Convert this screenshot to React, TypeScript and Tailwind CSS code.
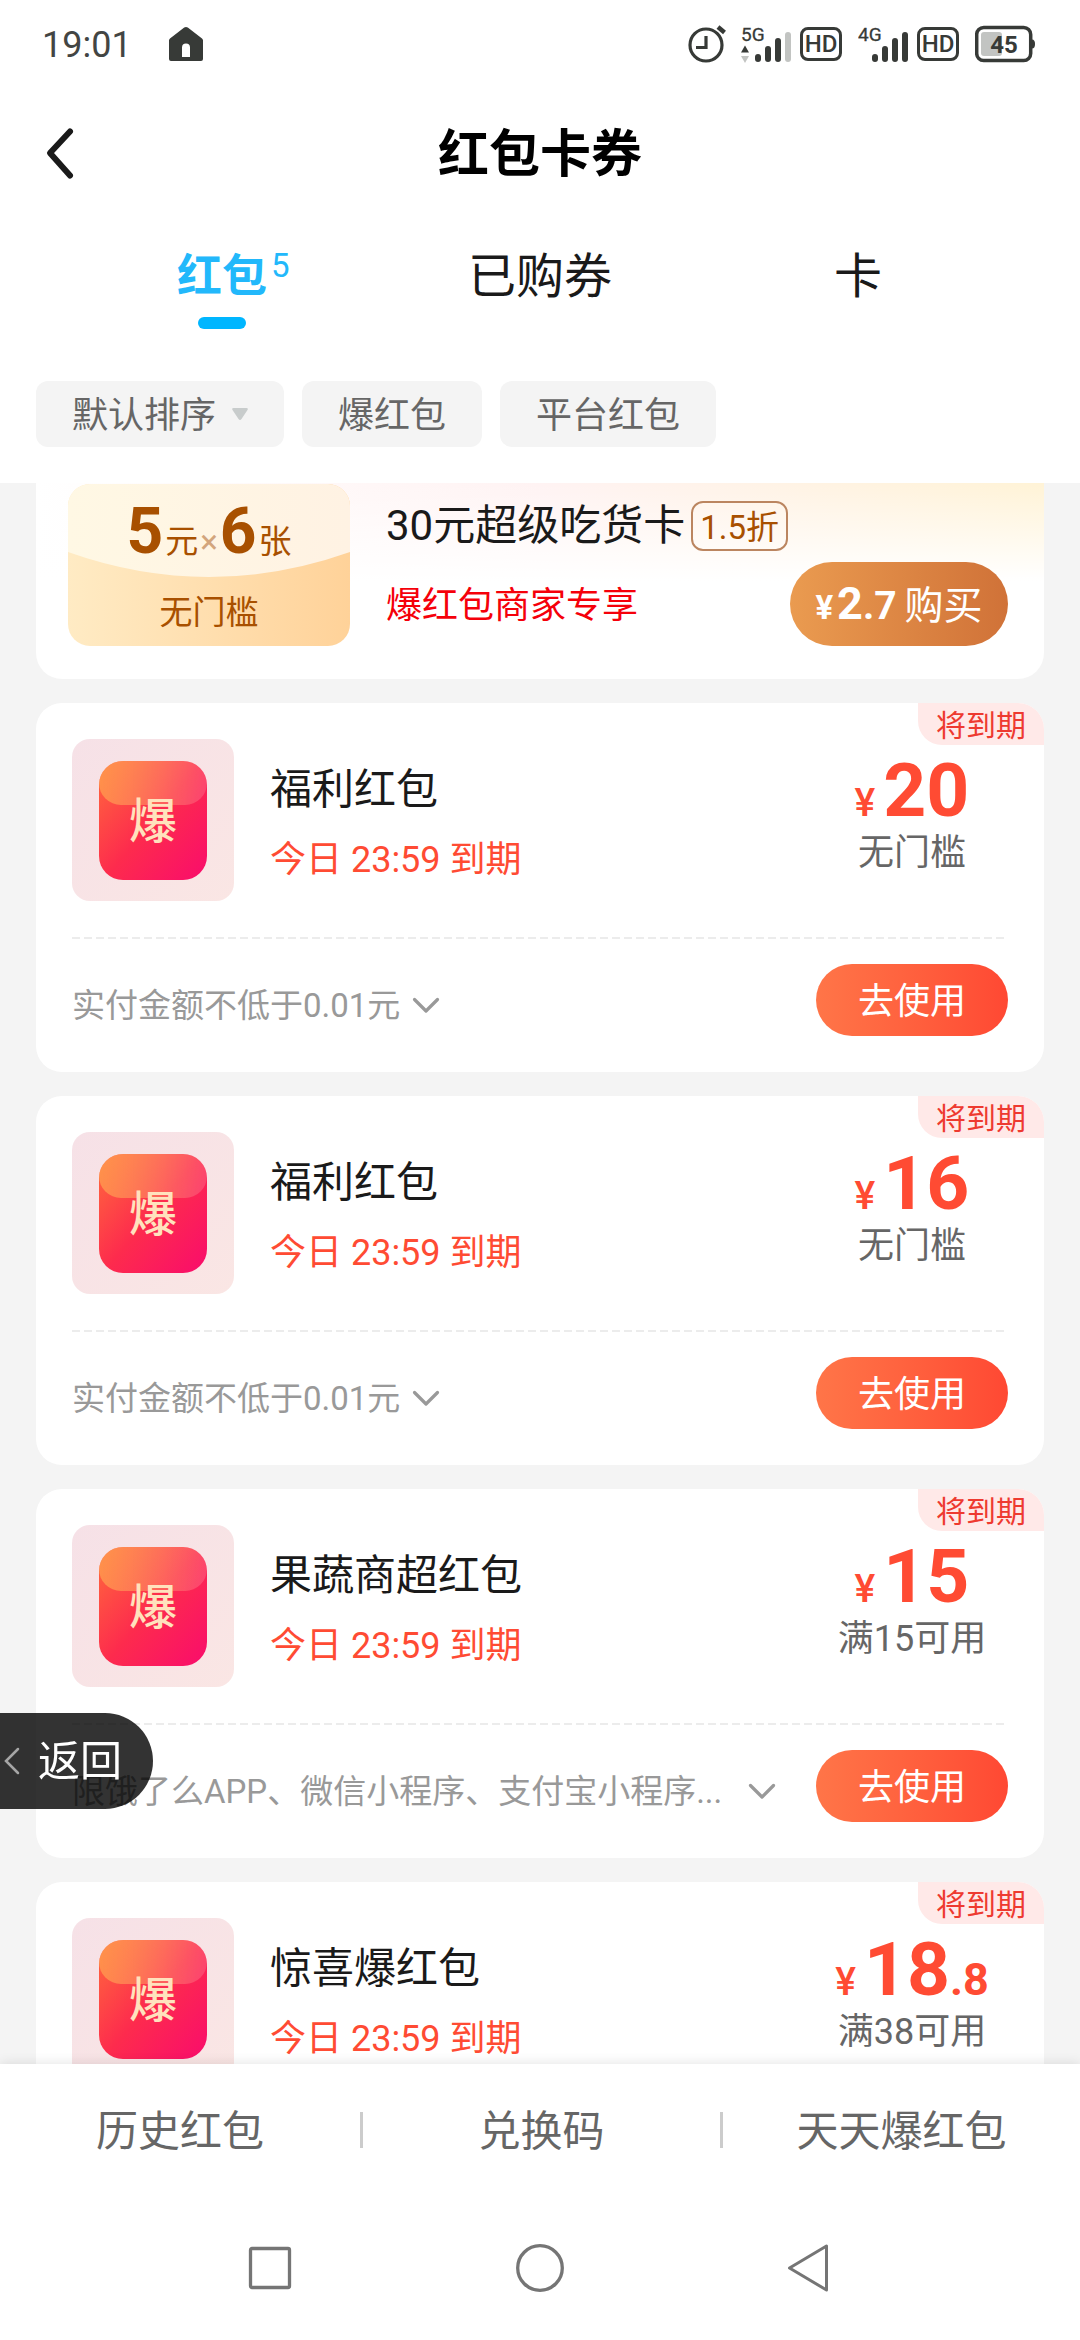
import React, { useState } from "react";

type Coupon = {
  id: number;
  title: string;
  amount: string;
  decimal?: string;
  condition: string;
  rule: string;
  longRule?: boolean;
};

const coupons: Coupon[] = [
  { id: 1, title: "福利红包", amount: "20", condition: "无门槛", rule: "实付金额不低于0.01元" },
  { id: 2, title: "福利红包", amount: "16", condition: "无门槛", rule: "实付金额不低于0.01元" },
  {
    id: 3,
    title: "果蔬商超红包",
    amount: "15",
    condition: "满15可用",
    rule: "限饿了么APP、微信小程序、支付宝小程序...",
    longRule: true,
  },
  { id: 4, title: "惊喜爆红包", amount: "18", decimal: ".8", condition: "满38可用", rule: "实付金额不低于0.01元" },
];

function AlarmIcon() {
  return (
    <svg className="h-10 w-10" viewBox="0 0 40 40" fill="none" stroke="#373a37" aria-hidden="true">
      <circle cx="19" cy="21" r="16" strokeWidth="3.2" />
      <path d="M19 12v11.5H9" strokeWidth="3.2" />
      <path d="M31 3l6.5 5.5" strokeWidth="4.5" />
    </svg>
  );
}

function SignalIcon({ label, weak }: { label: string; weak?: boolean }) {
  return (
    <svg className="h-10 w-[51px]" viewBox="0 0 51 40" fill="#373a37" role="img" aria-label={label}>
      <text x="0" y="17" fontSize="19" fontFamily="Roboto, sans-serif" stroke="#373a37" strokeWidth="0.3">
        {label}
      </text>
      {weak && <path d="M4 21.500l4 7H0z" />}
      {weak && <path d="M0 32h8l-4 7z" fill="#c2c4c2" />}
      <rect x="14" y="30" width="6" height="8" rx="3" />
      <rect x="24" y="22" width="6" height="16" rx="3" />
      <rect x="34" y="14" width="6" height="24" rx="3" />
      <rect x="44" y="8" width="6" height="30" rx="3" fill={weak ? "#c2c4c2" : "#373a37"} />
    </svg>
  );
}

function HdBadge() {
  return (
    <span className="flex h-[34px] w-[42px] items-center justify-center rounded-lg border-3 border-[#373a37] text-2xl leading-none font-medium text-[#373a37]">
      HD
    </span>
  );
}

function BatteryIcon() {
  return (
    <svg className="h-10 w-[60px]" viewBox="0 0 60 40" fill="none" role="img" aria-label="45%">
      <rect x="6" y="8" width="21" height="24" rx="3" fill="#c2c4c2" />
      <rect x="1.700" y="3.500" width="54" height="33" rx="7" stroke="#373a37" strokeWidth="3.500" />
      <path d="M57 15.500q3 0 3 4.500t-3 4.500z" fill="#373a37" />
      <text x="29" y="29" fontSize="24" fontWeight="700" fontFamily="Roboto, sans-serif" textAnchor="middle" fill="#373a37">
        45
      </text>
    </svg>
  );
}

function StatusBar() {
  return (
    <div className="flex h-[88px] shrink-0 items-center justify-between pr-[45px] pl-[42px]">
      <div className="flex items-center gap-9">
        <span className="pt-0.5 text-4xl text-[#434543]">19:01</span>
        <svg className="h-9 w-9" viewBox="0 0 36 36" aria-hidden="true">
          <path
            d="M16.200 1.600q1.800-1.200 3.600 0L34 12.600q1 .8 1 2V33q0 2-2 2H3q-2 0-2-2V14.600q0-1.200 1-2zM14 31h8V21.500a4 4 0 0 0-8 0z"
            fill="#373a37"
            fillRule="evenodd"
          />
        </svg>
      </div>
      <div className="flex items-center">
        <AlarmIcon />
        <span className="ml-3.5">
          <SignalIcon label="5G" weak />
        </span>
        <span className="ml-2">
          <HdBadge />
        </span>
        <span className="ml-4">
          <SignalIcon label="4G" />
        </span>
        <span className="ml-2">
          <HdBadge />
        </span>
        <span className="ml-4">
          <BatteryIcon />
        </span>
      </div>
    </div>
  );
}

function Header() {
  return (
    <header className="grid h-[129px] shrink-0 grid-cols-[1fr_auto_1fr] items-center px-9">
      <button type="button" aria-label="返回上一页" className="flex h-[72px] w-[72px] items-center">
        <svg className="h-[54px] w-12" viewBox="0 0 48 54" fill="none" aria-hidden="true">
          <path d="M34 5.500L14 27l20 22.500" stroke="#1a1a1a" strokeWidth="6" strokeLinecap="round" strokeLinejoin="round" />
        </svg>
      </button>
      <h1 className="pt-1 text-[51px] leading-[64px] font-bold text-black">红包卡券</h1>
    </header>
  );
}

function Tabs() {
  const [active, setActive] = useState(0);
  const tabs = [{ name: "红包", count: "5" }, { name: "已购券" }, { name: "卡" }];
  return (
    <div role="tablist" className="grid shrink-0 grid-cols-3 px-[63px] pt-7">
      {tabs.map((tab, i) => (
        <button
          key={tab.name}
          type="button"
          role="tab"
          aria-selected={active === i}
          onClick={() => setActive(i)}
          className="flex flex-col items-center gap-2"
        >
          <span
            className={
              active === i
                ? "relative text-[45px] leading-[64px] font-bold text-[#22b8fb]"
                : "relative text-[48px] leading-[64px] text-[#1a1a1a]"
            }
          >
            {tab.name}
            {tab.count && (
              <span className="absolute top-0 left-full pl-1 text-[33px] leading-[42px] font-normal">{tab.count}</span>
            )}
          </span>
          <span className={active === i ? "h-3 w-12 rounded-full bg-[#00b6ff]" : "h-3 w-12"} />
        </button>
      ))}
    </div>
  );
}

function Filters() {
  return (
    <div className="mt-[52px] flex shrink-0 gap-[18px] px-9 pb-9 text-4xl text-[#666666]">
      <label className="flex h-[66px] items-center gap-[15px] rounded-xl bg-[#f4f4f4] px-9">
        <select aria-label="排序" className="appearance-none bg-transparent pt-1 leading-[54px] outline-none">
          <option>默认排序</option>
        </select>
        <svg className="h-3 w-4" viewBox="0 0 16 12" aria-hidden="true">
          <path d="M1.500 0h13q2 0 1 2L9.500 11q-1.500 2-3 0L.5 2q-1-2 1-2z" fill="#c8cccc" />
        </svg>
      </label>
      <button type="button" className="h-[66px] rounded-xl bg-[#f4f4f4] px-9 pt-1">
        爆红包
      </button>
      <button type="button" className="h-[66px] rounded-xl bg-[#f4f4f4] px-9 pt-1">
        平台红包
      </button>
    </div>
  );
}

function Banner() {
  return (
    <section className="flex gap-9 rounded-b-[26px] bg-white bg-[linear-gradient(to_bottom,transparent,#ffffff_50%),linear-gradient(to_right,#ffffff,#fff3f3_50%,#fff3d6)] pt-px pr-9 pb-[33px] pl-8">
      <div className="relative h-[162px] w-[282px] shrink-0 overflow-hidden rounded-[22px] bg-linear-to-r from-[#ffebc4] to-[#ffd299] text-center text-[#a85000]">
        <svg className="absolute inset-0 h-full w-full" viewBox="0 0 282 162" preserveAspectRatio="none" aria-hidden="true">
          <defs>
            <linearGradient id="voucherTop">
              <stop offset="0" stopColor="#fff8e4" />
              <stop offset="1" stopColor="#fff2e3" />
            </linearGradient>
          </defs>
          <path d="M0 0h282v68Q141 118 0 68z" fill="url(#voucherTop)" />
        </svg>
        <div className="relative flex items-baseline justify-center gap-0.5 pt-3">
          <span className="text-[64px] leading-[72px] font-bold">5</span>
          <span className="text-[33px] leading-10">元</span>
          <span className="text-[33px] leading-10 text-[#d3a57c]">×</span>
          <span className="text-[64px] leading-[72px] font-bold">6</span>
          <span className="text-[33px] leading-10">张</span>
        </div>
        <div className="relative mt-6 text-[33px] leading-[42px]">无门槛</div>
      </div>
      <div className="min-w-0 flex-1 pt-4 whitespace-nowrap">
        <div className="flex items-center gap-1.5">
          <span className="text-[42px] leading-[52px] text-[#1a1a1a]">30元超级吃货卡</span>
          <span className="h-[50px] rounded-xl border-2 border-[#bb8560] px-[7px] text-[33px] leading-[50px] text-[#a85000]">
            1.5折
          </span>
        </div>
        <div className="mt-[33px] text-4xl leading-[42px] text-[#f5000a]">爆红包商家专享</div>
      </div>
      <button
        type="button"
        className="-ml-9 flex h-[84px] w-[218px] shrink-0 items-baseline justify-center self-end rounded-full bg-linear-to-r from-[#ea9b50] to-[#d07238] leading-[84px] text-white"
      >
        <span className="text-[33px] font-bold">¥</span>
        <span className="ml-1 text-[45px] font-bold">2</span>
        <span className="text-[39px] font-bold">.7</span>
        <span className="ml-2 text-[39px]">购买</span>
      </button>
    </section>
  );
}

function CouponIcon() {
  return (
    <div className="flex h-[162px] w-[162px] shrink-0 items-center justify-center rounded-[18px] bg-linear-to-br from-[#f6e1e7] to-[#fae6e4]">
      <div className="relative flex h-[119px] w-[108px] items-center justify-center overflow-hidden rounded-[24px] bg-[linear-gradient(130deg,#ff6a3c,#fd2b4d_50%,#f90c6c)]">
        <span className="absolute inset-x-0 top-0 h-11 rounded-b-[22px] bg-white/15 bg-linear-to-r from-[#ffa040]/60 to-transparent" />
        <span className="relative pt-1 text-[48px] leading-[56px] font-medium text-[#ffe2bd]">爆</span>
      </div>
    </div>
  );
}

function CouponCard({ coupon }: { coupon: Coupon }) {
  return (
    <article className="relative mt-6 shrink-0 overflow-hidden rounded-[26px] bg-white px-9 py-9">
      <span className="absolute top-0 right-0 rounded-bl-[24px] bg-[#ffe9e8] px-[18px] pt-1 text-[30px] leading-[38px] text-[#ee3a30]">
        将到期
      </span>
      <div className="flex gap-9">
        <CouponIcon />
        <div className="min-w-0 flex-1 pt-[26px]">
          <h2 className="text-[42px] leading-[50px] text-[#1a1a1a]">{coupon.title}</h2>
          <p className="mt-6 text-4xl leading-[42px] text-[#ff4b33]">今日 23:59 到期</p>
        </div>
        <div className="w-48 shrink-0 pt-[9px] text-center">
          <div className="flex items-baseline justify-center font-bold text-[#ff4b33]">
            <span className="text-[39px] leading-[48px] font-medium">¥</span>
            <span className="ml-2 text-[75px] leading-[84px]">{coupon.amount}</span>
            {coupon.decimal && <span className="text-[45px] leading-[48px]">{coupon.decimal}</span>}
          </div>
          <div className="text-4xl leading-[42px] text-[#666666]">{coupon.condition}</div>
        </div>
      </div>
      <div className="mt-9 h-0.5 bg-[repeating-linear-gradient(to_right,#ececec_0_8px,transparent_8px_12px)]" />
      <div className="flex items-end justify-between pt-[25px]">
        <button
          type="button"
          className={
            coupon.longRule
              ? "mr-10 flex min-w-0 flex-1 items-center justify-between"
              : "mr-10 flex min-w-0 items-center gap-3"
          }
        >
          <span className="truncate pt-0.5 text-[33px] leading-[60px] text-[#999999]">{coupon.rule}</span>
          <svg className="h-7 w-7 shrink-0" viewBox="0 0 28 28" fill="none" aria-hidden="true">
            <path d="M2.500 8.500L14 20 25.500 8.500" stroke="#999999" strokeWidth="3.200" strokeLinecap="round" strokeLinejoin="round" />
          </svg>
        </button>
        <button
          type="button"
          className="h-[72px] w-48 shrink-0 rounded-full bg-linear-to-r from-[#ff7548] to-[#ff4833] pt-1 text-4xl text-white"
        >
          去使用
        </button>
      </div>
    </article>
  );
}

function ReturnPill() {
  return (
    <button
      type="button"
      className="fixed bottom-[531px] left-0 flex h-24 w-[153px] items-center gap-[18px] rounded-r-full bg-black/80 pl-1 text-white"
    >
      <svg className="h-[30px] w-4" viewBox="0 0 16 30" fill="none" aria-hidden="true">
        <path d="M14 3L2 15l12 12" stroke="#a6a6a6" strokeWidth="2.500" strokeLinecap="round" />
      </svg>
      <span className="pt-0.5 text-[42px] leading-[50px]">返回</span>
    </button>
  );
}

function BottomLinks() {
  const links = ["历史红包", "兑换码", "天天爆红包"];
  return (
    <nav className="relative grid h-[132px] shrink-0 grid-cols-3 items-center bg-white shadow-[0_0_12px_rgba(0,0,0,0.12)]">
      {links.map((link, i) => (
        <a
          key={link}
          href="#"
          className={
            i > 0
              ? "border-l-3 border-[#cccccc] pt-1 text-center text-[42px] leading-8 text-[#666666]"
              : "pt-1 text-center text-[42px] leading-8 text-[#666666]"
          }
        >
          {link}
        </a>
      ))}
    </nav>
  );
}

function SystemNav() {
  return (
    <div className="relative grid h-36 shrink-0 grid-cols-3 items-center justify-items-center bg-white px-[135px]">
      <button type="button" aria-label="最近任务">
        <svg className="h-12 w-12" viewBox="0 0 48 48" fill="none" stroke="#757575" strokeWidth="3.300" aria-hidden="true">
          <rect x="4.500" y="4.500" width="39" height="39" rx="1.500" />
        </svg>
      </button>
      <button type="button" aria-label="主屏幕">
        <svg className="h-12 w-12" viewBox="0 0 48 48" fill="none" stroke="#757575" strokeWidth="3.300" aria-hidden="true">
          <circle cx="24" cy="24" r="22.300" />
        </svg>
      </button>
      <button type="button" aria-label="返回键">
        <svg
          className="h-12 w-12"
          viewBox="0 0 48 48"
          fill="none"
          stroke="#757575"
          strokeWidth="3"
          strokeLinejoin="round"
          aria-hidden="true"
        >
          <path d="M40.500 2v44L3.500 24z" />
        </svg>
      </button>
    </div>
  );
}

export default function App() {
  return (
    <div className="flex h-screen flex-col bg-white font-[Roboto,'Noto_Sans_CJK_SC',sans-serif]">
      <StatusBar />
      <Header />
      <Tabs />
      <Filters />
      <main className="flex min-h-0 flex-1 flex-col overflow-hidden bg-[#f4f4f4] px-9">
        <Banner />
        {coupons.map((coupon) => (
          <CouponCard key={coupon.id} coupon={coupon} />
        ))}
      </main>
      <ReturnPill />
      <BottomLinks />
      <SystemNav />
    </div>
  );
}
